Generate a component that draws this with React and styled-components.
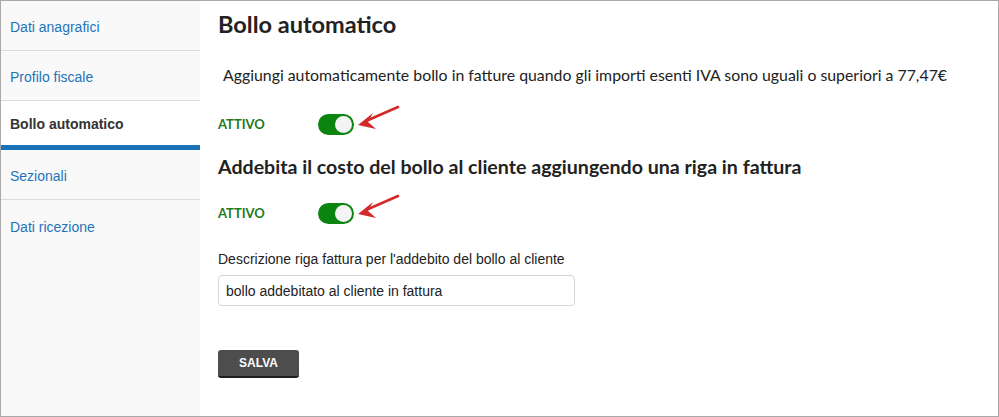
import styled, { createGlobalStyle } from 'styled-components';

const GlobalStyle = createGlobalStyle`
  html, body {
    margin: 0;
    padding: 0;
    background: #fff;
  }
  * {
    box-sizing: border-box;
  }
`;

const Frame = styled.div`
  width: 999px;
  height: 417px;
  border: 1px solid #a9a9a9;
  display: flex;
  background: #fff;
  overflow: hidden;
`;

const Sidebar = styled.nav`
  width: 199px;
  flex-shrink: 0;
  background: #f9f9f9;
  display: flex;
  flex-direction: column;
`;

const SideItem = styled.div`
  height: ${p => (p.active ? '49px' : '50px')};
  display: flex;
  align-items: center;
  padding: ${p => (p.active ? '3px 9px 1px' : '3px 9px 0')};
  font-family: "Liberation Sans", Arial, sans-serif;
  font-size: 14px;
  color: ${p => (p.active ? '#333' : '#1f74b9')};
  font-weight: ${p => (p.active ? 700 : 400)};
  background: ${p => (p.active ? '#fff' : 'transparent')};
  border-bottom: ${p => (p.active ? '5px solid #1a72b8' : '1px solid #dcdcdc')};

  &:last-child {
    border-bottom: none;
  }
`;

const Main = styled.main`
  flex: 1;
  padding: 8px 0 0 18px;
  font-family: Lato, "Open Sans", sans-serif;
  color: #222;
`;

const Title = styled.h1`
  margin: 0;
  font-size: 23.5px;
  font-weight: 700;
  line-height: 30px;
`;

const Description = styled.p`
  margin: 26px 0 0 5px;
  font-size: 15.85px;
  line-height: 20px;
`;

const ToggleRow = styled.div`
  display: flex;
  align-items: center;
  height: 40px;
  margin-top: ${p => p.top}px;
`;

const StatusLabel = styled.span`
  width: 100px;
  font-size: 13px;
  font-weight: 700;
  color: #1d7a1f;
`;

const Toggle = styled.span`
  position: relative;
  width: 36px;
  height: 21px;
  border-radius: 11px;
  background: #0b850f;

  &::after {
    content: '';
    position: absolute;
    right: 2px;
    top: 2px;
    width: 17px;
    height: 17px;
    border-radius: 50%;
    background: #f4f4f4;
  }
`;

const Arrow = styled.svg`
  margin-left: 2px;
  width: 46px;
  height: 40px;
`;

const SubTitle = styled.h2`
  margin: 10px 0 0;
  font-size: 19.6px;
  font-weight: 700;
  line-height: 26px;
`;

const FieldLabel = styled.label`
  display: block;
  margin-top: 18px;
  font-family: "Liberation Sans", Arial, sans-serif;
  font-size: 14px;
  line-height: 17px;
  color: #222;
`;

const TextInput = styled.input`
  display: block;
  margin-top: 7px;
  width: 357px;
  height: 31px;
  padding: 0 7px;
  border: 1px solid #d5d5d5;
  border-radius: 4px;
  font-family: "Liberation Sans", Arial, sans-serif;
  font-size: 14px;
  color: #222;
  outline: none;
`;

const SaveButton = styled.button`
  display: block;
  margin-top: 44px;
  width: 81px;
  height: 28px;
  border: none;
  border-bottom: 2px solid #1e1e1e;
  border-radius: 3px;
  background: #4d4d4d;
  color: #fff;
  font-family: "Liberation Sans", Arial, sans-serif;
  font-size: 12px;
  font-weight: 700;
  cursor: pointer;
`;

function RedArrow() {
  return (
    <Arrow viewBox="0 0 46 40">
      <line x1="42" y1="3" x2="10" y2="17" stroke="#d42a2a" strokeWidth="2.6" strokeLinecap="round" />
      <polygon points="2,21 17,9 12,18 20,25" fill="#d42a2a" />
    </Arrow>
  );
}

const menu = ['Dati anagrafici', 'Profilo fiscale', 'Bollo automatico', 'Sezionali', 'Dati ricezione'];

export default function App() {
  return (
    <>
      <GlobalStyle />
      <Frame>
        <Sidebar>
          {menu.map(item => (
            <SideItem key={item} active={item === 'Bollo automatico'}>
              {item}
            </SideItem>
          ))}
        </Sidebar>
        <Main>
          <Title>Bollo automatico</Title>
          <Description>
            Aggiungi automaticamente bollo in fatture quando gli importi esenti IVA sono uguali o superiori a 77,47€
          </Description>
          <ToggleRow top={19}>
            <StatusLabel>ATTIVO</StatusLabel>
            <Toggle />
            <RedArrow />
          </ToggleRow>
          <SubTitle>Addebita il costo del bollo al cliente aggiungendo una riga in fattura</SubTitle>
          <ToggleRow top={13}>
            <StatusLabel>ATTIVO</StatusLabel>
            <Toggle />
            <RedArrow />
          </ToggleRow>
          <FieldLabel>Descrizione riga fattura per l'addebito del bollo al cliente</FieldLabel>
          <TextInput defaultValue="bollo addebitato al cliente in fattura" />
          <SaveButton>SALVA</SaveButton>
        </Main>
      </Frame>
    </>
  );
}
